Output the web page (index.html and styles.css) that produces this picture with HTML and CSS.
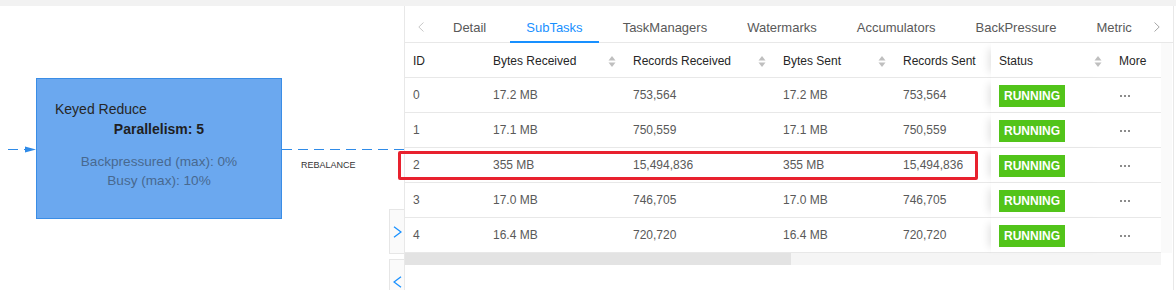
FILE: index.html
```html
<!DOCTYPE html>
<html lang="en">
<head>
    <meta charset="UTF-8">
    <meta name="viewport" content="width=device-width, initial-scale=1.0">
    <title>Job Graph - SubTasks</title>
    <link rel="stylesheet" href="styles.css">
</head>
<body>
    <div class="topbar"></div>

    <div class="layout">
        <div class="graph">
            <svg class="edges" width="404" height="284" viewBox="0 0 404 284">
                <path d="M8 143.5 H36" class="edge"/>
                <polygon points="25,140.5 36,143.5 25,146.5" class="arrow"/>
                <path d="M282 143.5 H404" class="edge"/>
            </svg>

            <div class="node">
                <div class="node-title">Keyed Reduce</div>
                <div class="node-parallel">Parallelism: 5</div>
                <div class="node-metrics">
                    <div>Backpressured (max): 0%</div>
                    <div>Busy (max): 10%</div>
                </div>
            </div>
            <span class="edge-label">REBALANCE</span>

            <a href="#expand" class="toggle toggle-open">
                <svg width="9" height="12" viewBox="0 0 9 12"><polyline points="1,0.7 8,6 1,11.3"/></svg>
            </a>
            <a href="#collapse" class="toggle toggle-close">
                <svg width="9" height="12" viewBox="0 0 9 12"><polyline points="8,0.7 1,6 8,11.3"/></svg>
            </a>
        </div>

        <div class="drawer">
            <div class="tabs">
                <span class="tab-arrow prev">
                    <svg width="6" height="10" viewBox="0 0 6 10"><polyline points="5.5,0.5 0.8,5 5.5,9.5"/></svg>
                </span>
                <div class="tab-list">
                    <a href="#detail" class="tab">Detail</a>
                    <a href="#subtasks" class="tab active">SubTasks</a>
                    <a href="#taskmanagers" class="tab">TaskManagers</a>
                    <a href="#watermarks" class="tab">Watermarks</a>
                    <a href="#accumulators" class="tab">Accumulators</a>
                    <a href="#backpressure" class="tab">BackPressure</a>
                    <a href="#metrics" class="tab">Metric</a>
                </div>
                <span class="tab-arrow next">
                    <svg width="6" height="10" viewBox="0 0 6 10"><polyline points="0.5,0.5 5.2,5 0.5,9.5"/></svg>
                </span>
            </div>

            <div class="table-area">
                <table class="subtasks">
                    <colgroup>
                        <col class="c-id">
                        <col class="c-bytes-in">
                        <col class="c-rec-in">
                        <col class="c-bytes-out">
                        <col class="c-rec-out">
                        <col class="c-status">
                        <col class="c-more">
                    </colgroup>
                    <thead>
                        <tr>
                            <th>ID</th>
                            <th><div class="th-inner">Bytes Received <span class="sorter"></span></div></th>
                            <th><div class="th-inner">Records Received <span class="sorter"></span></div></th>
                            <th><div class="th-inner">Bytes Sent <span class="sorter"></span></div></th>
                            <th>Records Sent</th>
                            <th class="fix"><div class="th-inner">Status <span class="sorter"></span></div></th>
                            <th>More</th>
                        </tr>
                    </thead>
                    <tbody id="rows"></tbody>
                </table>
                <div class="gutter"></div>
            </div>
            <div class="scrollbar"><div class="thumb"></div></div>
        </div>

        <div class="highlight"></div>
    </div>

    <script>
        const subtasks = [
            { id: 0, bytesIn: '17.2 MB', recIn: '753,564', bytesOut: '17.2 MB', recOut: '753,564' },
            { id: 1, bytesIn: '17.1 MB', recIn: '750,559', bytesOut: '17.1 MB', recOut: '750,559' },
            { id: 2, bytesIn: '355 MB', recIn: '15,494,836', bytesOut: '355 MB', recOut: '15,494,836' },
            { id: 3, bytesIn: '17.0 MB', recIn: '746,705', bytesOut: '17.0 MB', recOut: '746,705' },
            { id: 4, bytesIn: '16.4 MB', recIn: '720,720', bytesOut: '16.4 MB', recOut: '720,720' }
        ];

        const dots = '<svg class="more" width="10" height="2" viewBox="0 0 10 2">' +
            '<rect x="0" width="2" height="2"/><rect x="4" width="2" height="2"/><rect x="8" width="2" height="2"/></svg>';

        const tbody = document.getElementById('rows');
        subtasks.forEach((t) => {
            const tr = document.createElement('tr');
            tr.innerHTML = `
                <td>${t.id}</td>
                <td>${t.bytesIn}</td>
                <td>${t.recIn}</td>
                <td>${t.bytesOut}</td>
                <td>${t.recOut}</td>
                <td class="fix"><span class="status">RUNNING</span></td>
                <td>${dots}</td>`;
            tbody.appendChild(tr);
        });

        // sort arrows
        document.querySelectorAll('.sorter').forEach((s) => {
            s.innerHTML = '<svg width="8" height="13" viewBox="0 0 8 13">' +
                '<polygon points="0.5,5.5 4,1 7.5,5.5"/><polygon points="0.5,7.5 4,12 7.5,7.5"/></svg>';
        });
    </script>
</body>
</html>
```

FILE: styles.css
```css
body {
    font-family: "Liberation Sans", Arial, sans-serif;
    color: #262626;
    background-color: #fff;
    margin: 0;
    padding: 0;
    width: 1176px;
    height: 290px;
    overflow: hidden;
}
a {
    text-decoration: none;
}
.topbar {
    height: 6px;
    background-color: #f2f2f2;
}
.layout {
    display: flex;
    position: relative;
    height: 284px;
}

/* graph canvas */
.graph {
    width: 404px;
    flex: none;
    position: relative;
}
.edges {
    position: absolute;
    left: 0;
    top: 0;
}
.edge {
    stroke: #2f8be8;
    stroke-width: 1;
    stroke-dasharray: 10 6;
    fill: none;
}
.arrow {
    fill: #2f8be8;
}
.node {
    position: absolute;
    left: 36px;
    top: 72px;
    width: 246px;
    height: 141px;
    box-sizing: border-box;
    background-color: #6ba8ef;
    border: 1px solid #3a8de6;
    padding-top: 20px;
    font-size: 14px;
}
.node-title {
    padding-left: 18px;
    line-height: 20px;
    color: #262626;
}
.node-parallel {
    text-align: center;
    font-weight: bold;
    line-height: 20px;
    color: #1f1f1f;
}
.node-metrics {
    margin-top: 13px;
    text-align: center;
    line-height: 19px;
    font-size: 13.6px;
    color: #48698f;
}
.edge-label {
    position: absolute;
    left: 301px;
    top: 154px;
    font-size: 9px;
    line-height: 10px;
    color: #333;
}
.toggle {
    position: absolute;
    left: 389px;
    width: 15px;
    height: 45px;
    box-sizing: border-box;
    border: 1px solid #e6e6e6;
    border-right: none;
    background-color: #fafafa;
    display: flex;
    align-items: center;
    justify-content: center;
}
.toggle svg polyline {
    fill: none;
    stroke: #1890ff;
    stroke-width: 1.3;
}
.toggle-open {
    top: 203px;
}
.toggle-close {
    top: 253px;
}

/* drawer */
.drawer {
    width: 770px;
    flex: none;
    box-sizing: border-box;
    border-left: 1px solid #e8e8e8;
    border-right: 1px solid #e8e8e8;
}
.tabs {
    display: flex;
    height: 37px;
    box-shadow: inset 0 -1px 0 #e8e8e8;
}
.tab-arrow {
    width: 32px;
    flex: none;
    display: flex;
    align-items: center;
    justify-content: center;
    padding-top: 4px;
    box-sizing: border-box;
}
.tab-arrow polyline {
    fill: none;
    stroke-width: 1;
}
.tab-arrow.prev polyline {
    stroke: #c8c8c8;
}
.tab-arrow.next polyline {
    stroke: #a6a6a6;
}
.tab-list {
    flex: 1;
    min-width: 0;
    display: flex;
    overflow: hidden;
}
.tab {
    flex: none;
    padding: 8px 16px 0;
    margin-right: 8px;
    line-height: 27px;
    font-size: 13px;
    color: #595959;
    border-bottom: 2px solid transparent;
}
.tab.active {
    color: #1890ff;
    border-bottom-color: #1890ff;
}

/* table */
.table-area {
    display: flex;
}
.subtasks {
    width: 756px;
    table-layout: fixed;
    border-collapse: separate;
    border-spacing: 0;
    font-size: 12px;
}
.c-id { width: 80px; }
.c-bytes-in { width: 140px; }
.c-rec-in { width: 150px; }
.c-bytes-out { width: 120px; }
.c-rec-out { width: 96px; }
.c-status { width: 120px; }
.c-more { width: 50px; }
.subtasks th,
.subtasks td {
    padding: 0 8px;
    line-height: 34px;
    border-bottom: 1px solid #e8e8e8;
    text-align: left;
    white-space: nowrap;
    background-color: #fff;
}
.subtasks th {
    padding-top: 2px;
    line-height: 32px;
    font-weight: normal;
    color: #262626;
}
.subtasks td {
    color: #595959;
}
.subtasks .fix {
    box-shadow: -8px 0 8px -6px rgba(0,0,0,0.12);
}
.th-inner {
    display: flex;
    justify-content: space-between;
    align-items: center;
}
.sorter {
    display: flex;
    padding-right: 1px;
}
.sorter polygon {
    fill: #bfbfbf;
}
.status {
    display: inline-block;
    vertical-align: middle;
    background-color: #52c41a;
    color: #fff;
    font-weight: bold;
    font-size: 12px;
    line-height: 22px;
    padding: 0 5px;
}
.more {
    vertical-align: middle;
    margin-left: 1px;
}
.more rect {
    fill: #8c8c8c;
}
.gutter {
    width: 11px;
    background-color: #fafafa;
}
.scrollbar {
    width: 756px;
    height: 12px;
    background-color: #f5f5f5;
}
.thumb {
    width: 386px;
    height: 12px;
    background-color: #e3e3e3;
}

/* annotation */
.highlight {
    position: absolute;
    left: 398px;
    top: 145px;
    width: 580px;
    height: 29px;
    box-sizing: border-box;
    border: 3px solid #e8212e;
    border-radius: 2px;
}
```
